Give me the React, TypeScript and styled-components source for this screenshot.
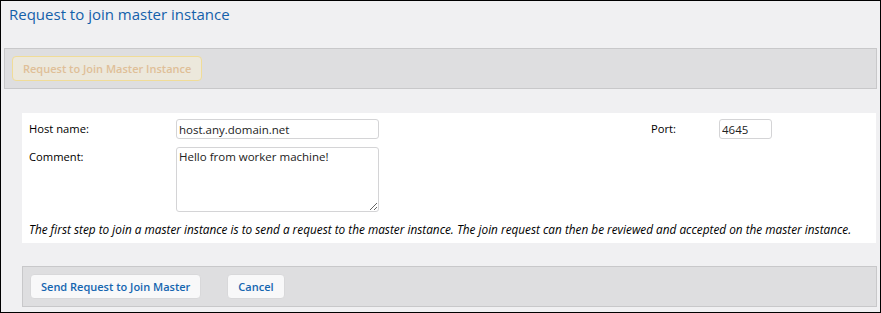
import styled, { createGlobalStyle } from 'styled-components';

const GlobalStyle = createGlobalStyle`
  html, body {
    margin: 0;
    padding: 0;
    background: #f0f0f2;
  }
  * {
    box-sizing: border-box;
  }
`;

const Frame = styled.div`
  width: 881px;
  height: 313px;
  border: 1px solid #000;
  background: #f0f0f2;
  font-family: 'Open Sans', 'Noto Sans', sans-serif;
  color: #000;
  display: flex;
  flex-direction: column;
`;

const Title = styled.h1`
  margin: 0;
  padding: 3px 0 0 8px;
  height: 47px;
  font-size: 15px;
  font-weight: 400;
  color: #1460aa;
`;

const Toolbar = styled.div<{ $inset?: number }>`
  display: flex;
  align-items: center;
  gap: 26px;
  height: 41px;
  margin: 0 3px 0 ${(p) => p.$inset ?? 3}px;
  padding: 0 7px;
  background: #dedee0;
  border: 1px solid #c8c8ca;
`;

const Button = styled.button<{ $disabled?: boolean }>`
  height: 25px;
  padding: 0 10px;
  font-family: inherit;
  font-size: 11px;
  font-weight: 600;
  border-radius: 4px;
  cursor: pointer;
  color: ${(p) => (p.$disabled ? '#dfbf98' : '#1565b0')};
  background: ${(p) => (p.$disabled ? '#ece8dc' : '#f8f8f9')};
  border: 1px solid ${(p) => (p.$disabled ? '#f0dc98' : '#d8d8da')};
`;

const Body = styled.div`
  display: flex;
  flex-direction: column;
  padding-left: 21px;
  margin-top: 24px;
`;

const Panel = styled.div`
  background: #fff;
  margin-right: 4px;
  padding: 6px 7px 6px 7px;
`;

const FormGrid = styled.div`
  display: grid;
  grid-template-columns: 147px 203px 272px 68px 53px;
  row-gap: 8px;
  align-items: start;
`;

const Label = styled.label`
  font-size: 11.2px;
  line-height: 16px;
  padding-top: 2px;
`;

const TextInput = styled.input<{ $width?: number }>`
  width: ${(p) => p.$width ?? 203}px;
  height: 20px;
  padding: 0 2px;
  font-family: inherit;
  font-size: 11.5px;
  color: #222;
  border: 1px solid #d4d4d6;
  border-radius: 3px;
  outline: none;
`;

const TextArea = styled.textarea`
  width: 203px;
  height: 65px;
  padding: 1px 2px;
  font-family: inherit;
  font-size: 11.5px;
  color: #222;
  border: 1px solid #d4d4d6;
  border-radius: 3px;
  resize: both;
  outline: none;
`;

const Note = styled.p`
  margin: 9px 0 0;
  font-size: 11.8px;
  font-style: italic;
  line-height: 16px;
  white-space: nowrap;
`;

const Footer = styled.div`
  margin-top: 23px;
  display: flex;
  flex-direction: column;
`;

export default function App() {
  return (
    <>
      <GlobalStyle />
      <Frame>
        <Title>Request to join master instance</Title>
        <Toolbar>
          <Button $disabled disabled>
            Request to Join Master Instance
          </Button>
        </Toolbar>
        <Body>
          <Panel>
            <FormGrid>
              <Label>Host name:</Label>
              <TextInput defaultValue="host.any.domain.net" />
              <span />
              <Label>Port:</Label>
              <TextInput $width={53} defaultValue="4645" />
              <Label>Comment:</Label>
              <TextArea defaultValue="Hello from worker machine!" />
            </FormGrid>
            <Note>
              The first step to join a master instance is to send a request to the master instance. The join
              request can then be reviewed and accepted on the master instance.
            </Note>
          </Panel>
          <Footer>
            <Toolbar $inset={0}>
              <Button>Send Request to Join Master</Button>
              <Button>Cancel</Button>
            </Toolbar>
          </Footer>
        </Body>
      </Frame>
    </>
  );
}
